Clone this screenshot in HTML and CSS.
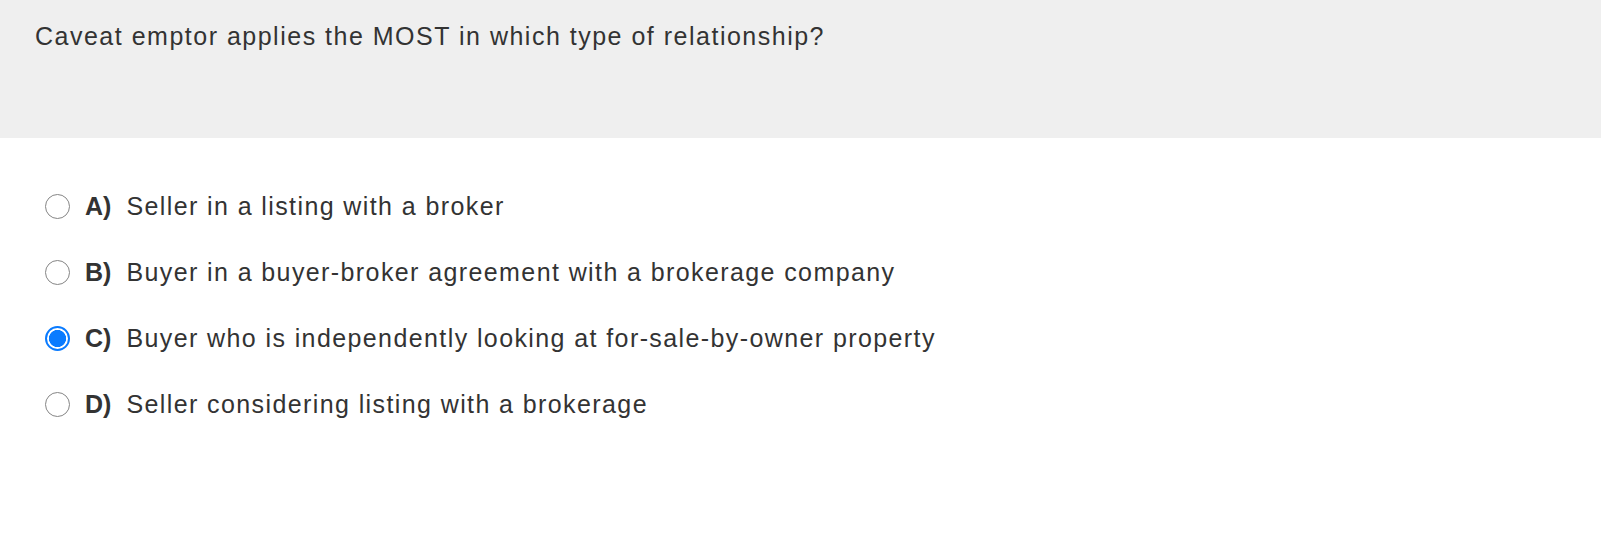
FILE: index.html
```html
<!DOCTYPE html>
<html lang="en">
<head>
<meta charset="utf-8">
<title>Question</title>
<link rel="stylesheet" href="styles.css">
</head>
<body>
<div class="question">
  <p class="question-text">Caveat emptor applies the MOST in which type of relationship?</p>
</div>
<form class="answers">
  <label class="answer">
    <input type="radio" name="ans" class="radio">
    <span class="letter">A)</span>
    <span class="answer-text">Seller in a listing with a broker</span>
  </label>
  <label class="answer">
    <input type="radio" name="ans" class="radio">
    <span class="letter">B)</span>
    <span class="answer-text">Buyer in a buyer-broker agreement with a brokerage company</span>
  </label>
  <label class="answer">
    <input type="radio" name="ans" class="radio" checked>
    <span class="letter">C)</span>
    <span class="answer-text">Buyer who is independently looking at for-sale-by-owner property</span>
  </label>
  <label class="answer">
    <input type="radio" name="ans" class="radio">
    <span class="letter">D)</span>
    <span class="answer-text">Seller considering listing with a brokerage</span>
  </label>
</form>
</body>
</html>
```
FILE: styles.css
```css
html, body {
  margin: 0;
  padding: 0;
  background: #ffffff;
}
body {
  font-family: "Liberation Sans", Arial, Helvetica, sans-serif;
  color: #333333;
  font-size: 25px;
  letter-spacing: 1.4px;
}
.question {
  background: #efefef;
  height: 138px;
  box-sizing: border-box;
  padding: 21px 35px 0;
}
.question-text {
  margin: 0;
  line-height: 30px;
  font-size: 25px;
  letter-spacing: 1.5px;
}
.answers {
  display: flex;
  flex-direction: column;
  padding: 35px 0 0 45px;
}
.answer {
  display: flex;
  align-items: center;
  height: 66px;
  cursor: pointer;
}
.radio {
  appearance: none;
  -webkit-appearance: none;
  margin: 0 15px 0 0;
  width: 25px;
  height: 25px;
  border-radius: 50%;
  border: 1.5px solid #858585;
  background: #ffffff;
  box-sizing: border-box;
  flex: none;
}
.radio:checked {
  border: 2.5px solid #0a7bff;
  background: radial-gradient(circle, #0a7bff 0 8.3px, #ffffff 8.8px);
}
.letter {
  font-weight: bold;
  letter-spacing: 0;
  margin-right: 15px;
}
.answer-text {
  line-height: 30px;
}
```
